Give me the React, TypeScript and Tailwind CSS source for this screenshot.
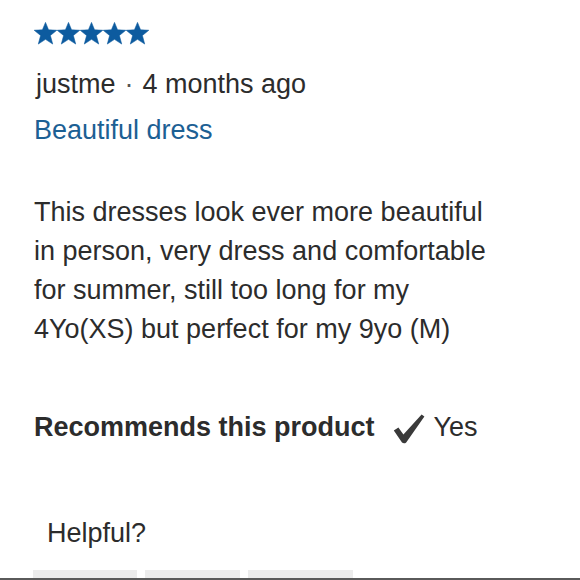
import { Fragment } from "react";

type StarProps = {
  filled?: boolean;
};

const Star = ({ filled = true }: StarProps) => {
  return (
    <svg width="23" height="23" viewBox="0 0 24 24" className="shrink-0">
      <polygon
        points="12,0.4 15.2,8.2 23.8,8.6 17.1,14.1 19.5,23 12,18.1 4.5,23 6.9,14.1 0.2,8.6 8.8,8.2"
        fill={filled ? "#0d5b9f" : "#d1d5db"}
        stroke={filled ? "#0d5b9f" : "#d1d5db"}
        strokeWidth="0.6"
        strokeLinejoin="round"
      />
    </svg>
  );
};

const CheckMark = () => {
  return (
    <svg width="32" height="30" viewBox="0 0 32 30" className="shrink-0">
      <path
        d="M0.8 16.6 L5.4 13.4 L10.4 20.6 L28.6 0.6 L31.4 2.4 L13.2 28.4 Q11.2 30 9 28.6 Z"
        fill="#3a3a3a"
        strokeLinejoin="round"
      />
    </svg>
  );
};

const review = {
  rating: 5,
  author: "justme",
  when: "4 months ago",
  title: "Beautiful dress",
  body: [
    "This dresses look ever more beautiful",
    "in person, very dress and comfortable",
    "for summer, still too long for my",
    "4Yo(XS) but perfect for my 9yo (M)",
  ],
};

const App = () => {
  return (
    <div className="w-[580px] h-[580px] bg-white overflow-hidden flex flex-col font-['Liberation_Sans',Arial,sans-serif] text-[27px] text-[#2c2c2c]">
      <div className="flex-1 pl-[34px] pt-[22px] flex flex-col">
        {/* Stars */}
        <div className="flex h-[23px]">
          {[1, 2, 3, 4, 5].map((n) => (
            <Star key={n} filled={n <= review.rating} />
          ))}
        </div>

        {/* Author + date */}
        <div className="mt-[20px] leading-[39px] pl-[2px]">
          {review.author}
          <span className="mx-[9px] text-[#555]">·</span>
          {review.when}
        </div>

        {/* Title */}
        <div className="mt-[7px] leading-[39px] text-[#1c6094]">{review.title}</div>

        {/* Body */}
        <p className="mt-[43px] leading-[39px]">
          {review.body.map((line, i) => (
            <Fragment key={i}>
              {line}
              {i < review.body.length - 1 && <br />}
            </Fragment>
          ))}
        </p>

        {/* Recommends */}
        <div className="mt-[59px] flex items-start leading-[39px]">
          <span className="font-bold">Recommends this product</span>
          <span className="ml-[18px] mt-[6px]">
            <CheckMark />
          </span>
          <span className="ml-[9px]">Yes</span>
        </div>

        {/* Helpful */}
        <div className="mt-[67px] leading-[39px] pl-[13px]">Helpful?</div>

        {/* Buttons (cut off) */}
        <div className="mt-[17px] flex gap-[8px] -ml-[1px]">
          <div className="w-[104px] h-[8px] bg-[#ececec]" />
          <div className="w-[95px] h-[8px] bg-[#ececec]" />
          <div className="w-[105px] h-[8px] bg-[#ececec]" />
        </div>
      </div>
      <div className="h-[2px] w-full bg-[#5a5a5a]" />
    </div>
  );
};

export default App;
